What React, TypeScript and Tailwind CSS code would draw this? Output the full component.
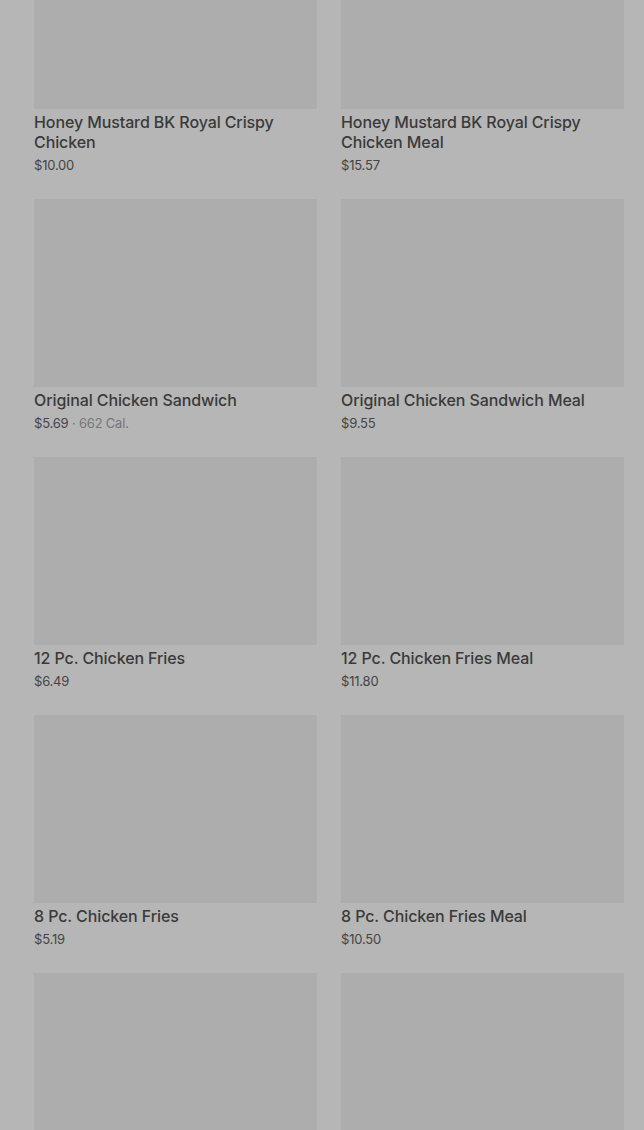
import React from 'react';

interface MenuItem {
  name: string;
  price: string;
  cal?: string;
}

const items: MenuItem[] = [
  { name: 'Honey Mustard BK Royal Crispy Chicken', price: '$10.00' },
  { name: 'Honey Mustard BK Royal Crispy Chicken Meal', price: '$15.57' },
  { name: 'Original Chicken Sandwich', price: '$5.69', cal: '662 Cal.' },
  { name: 'Original Chicken Sandwich Meal', price: '$9.55' },
  { name: '12 Pc. Chicken Fries', price: '$6.49' },
  { name: '12 Pc. Chicken Fries Meal', price: '$11.80' },
  { name: '8 Pc. Chicken Fries', price: '$5.19' },
  { name: '8 Pc. Chicken Fries Meal', price: '$10.50' },
  { name: '', price: '' },
  { name: '', price: '' },
];

function ItemCard({ item }: { item: MenuItem }) {
  return (
    <div className="flex flex-col">
      <div className="h-[188px] w-full bg-[#adadad]" />
      {item.name && (
        <>
          <div className="mt-[3px] text-[16px] leading-[20px] font-medium tracking-[-0.1px] text-[#3a3a3a]">
            {item.name}
          </div>
          <div className="mt-[4px] text-[13px] leading-[18px] tracking-[-0.2px] text-[#454545]">
            {item.price}
            {item.cal && (
              <span className="text-[#767676]"> · {item.cal}</span>
            )}
          </div>
        </>
      )}
    </div>
  );
}

export default function App() {
  return (
    <div
      className="h-[1130px] w-full overflow-hidden bg-[#b6b6b6]"
      style={{ fontFamily: 'Inter, "Open Sans", sans-serif' }}
    >
      <div className="-mt-[79px] grid grid-cols-2 gap-x-6 gap-y-[25px] pl-[34px] pr-[20px]">
        {items.map((item, i) => (
          <ItemCard key={i} item={item} />
        ))}
      </div>
    </div>
  );
}
